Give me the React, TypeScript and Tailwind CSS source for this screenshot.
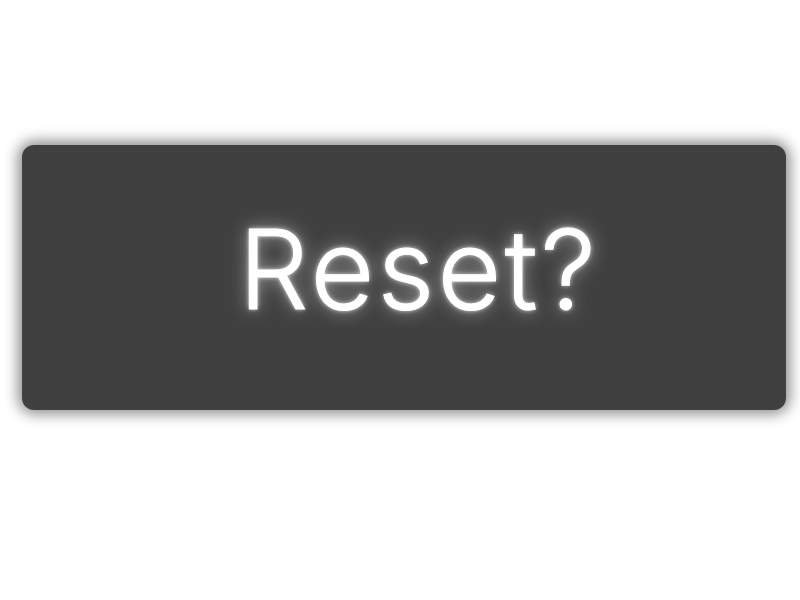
import React from "react";

export default function App() {
  return (
    <div className="w-[800px] h-[600px] bg-white pt-[145px] pl-[22px]">
      <div className="w-[764px] h-[265px] rounded-[12px] bg-[#404040] shadow-[0_0_14px_4px_rgba(0,0,0,0.45)] flex items-center justify-center">
        <span
          className="text-white text-[110px] leading-none font-light tracking-[0.03em] pb-[18px] pl-[30px] [-webkit-text-stroke:1px_white] [text-shadow:0_0_5px_rgba(255,255,255,0.9),0_0_18px_rgba(255,255,255,0.6)]"
          style={{ fontFamily: 'Inter, "Noto Sans", sans-serif' }}
        >
          Reset?
        </span>
      </div>
    </div>
  );
}
